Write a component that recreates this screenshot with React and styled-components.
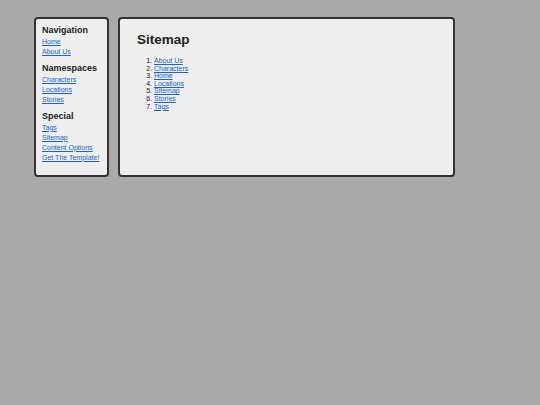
import React from "react";
import styled, { createGlobalStyle } from "styled-components";

const Global = createGlobalStyle`
  html, body {
    margin: 0;
    background: #aaaaaa;
    font-family: "Liberation Sans", Arial, sans-serif;
    color: #222;
  }
`;

const Page = styled.div`
  display: flex;
  align-items: flex-start;
  gap: 9px;
  padding: 17px 34px;
`;

const Box = styled.div`
  background: #eeeeee;
  border: 2px solid #333;
  border-radius: 4px;
  box-sizing: border-box;
  height: 160px;
`;

const Sidebar = styled(Box)`
  width: 75px;
  padding: 6px 6px;
`;

const Main = styled(Box)`
  width: 337px;
  padding: 11px 17px;
`;

const Group = styled.div`
  margin-bottom: 6.5px;
`;

const GroupTitle = styled.h3`
  margin: 0 0 0.5px;
  font-size: 9px;
  line-height: 11px;
  font-weight: bold;
  color: #222;
`;

const NavLink = styled.a`
  display: block;
  font-size: 7px;
  line-height: 10px;
  color: #1a64c8;
  text-decoration: underline;
`;

const Title = styled.h1`
  margin: 0 0 7px;
  font-size: 13.5px;
  line-height: 20px;
  font-weight: bold;
  color: #222;
`;

const List = styled.ol`
  margin: 0;
  padding-left: 17px;
  font-size: 7px;
  line-height: 7.6px;
`;

const ListLink = styled.a`
  color: #1a64c8;
  text-decoration: underline;
`;

const nav = [
  { title: "Navigation", links: ["Home", "About Us"] },
  { title: "Namespaces", links: ["Characters", "Locations", "Stories"] },
  { title: "Special", links: ["Tags", "Sitemap", "Content Options", "Get The Template!"] },
];

const pages = ["About Us", "Characters", "Home", "Locations", "Sitemap", "Stories", "Tags"];

export default function App() {
  return (
    <>
      <Global />
      <Page>
        <Sidebar>
          {nav.map((g) => (
            <Group key={g.title}>
              <GroupTitle>{g.title}</GroupTitle>
              {g.links.map((l) => (
                <NavLink key={l} href="#">{l}</NavLink>
              ))}
            </Group>
          ))}
        </Sidebar>
        <Main>
          <Title>Sitemap</Title>
          <List>
            {pages.map((p) => (
              <li key={p}>
                <ListLink href="#">{p}</ListLink>
              </li>
            ))}
          </List>
        </Main>
      </Page>
    </>
  );
}
